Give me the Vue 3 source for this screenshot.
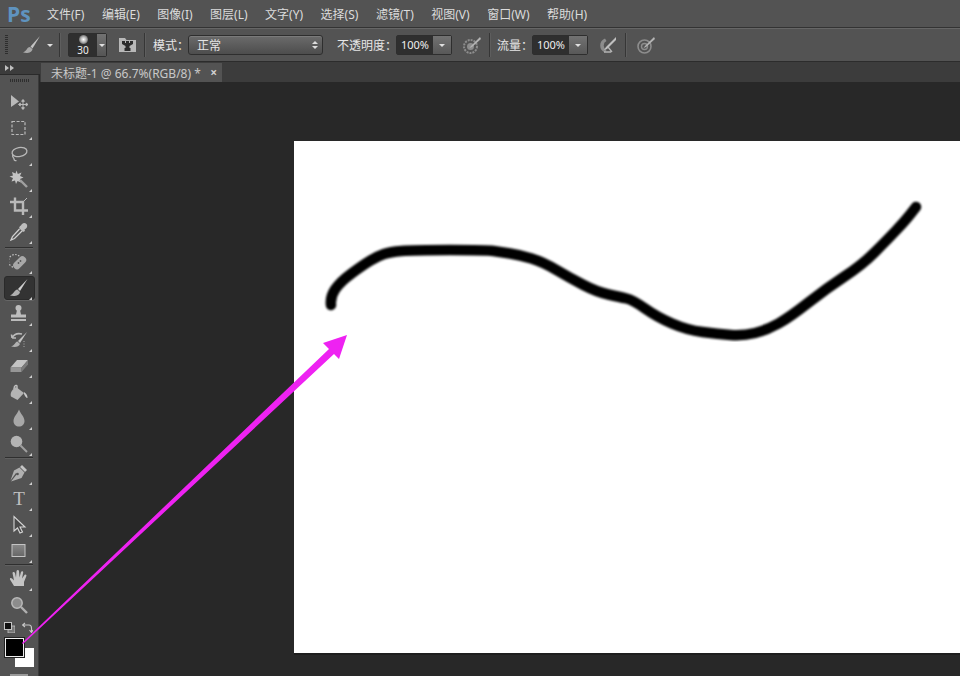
<template>
  <div class="ps">
    <header class="menubar">
      <span class="logo">Ps</span>
      <span v-for="m in menus" :key="m" class="menu-item">{{ m }}</span>
    </header>

    <section class="options">
      <span class="grip-v"></span>
      <svg class="opt-brush" width="20" height="20" viewBox="0 0 20 20">
        <path d="M18 1 L8.5 11.5 L10.5 13.5 Z" fill="#c4c4c4" />
        <path d="M8 12 C4.5 12.5 5 16 1 17.5 C5 18.5 10 18 10.5 14 Z" fill="#a8a8a8" />
      </svg>
      <span class="caret opt-caret"></span>
      <span class="sep"></span>
      <div class="preset">
        <div class="preset-view">
          <span class="dot"></span>
          <span class="size">30</span>
        </div>
        <div class="preset-arrow"><span class="caret"></span></div>
      </div>
      <svg class="opt-folder" width="17" height="16" viewBox="0 0 17 16">
        <path d="M0 1 H6 L7.5 3 H17 V15 H0 Z" fill="#b8b8b8" />
        <path d="M3 4 H6 V6 H7 V4 H10 V6 H11 V4 H14 V7 L10.500 9 V11 H11.500 V14 H5.500 V11 H6.500 V9 L3 7 Z" fill="#2e2e2e" />
      </svg>
      <span class="sep"></span>
      <span class="opt-label mode-label">模式：</span>
      <div class="select">
        <span>正常</span>
        <span class="updown"><i class="up"></i><i class="down"></i></span>
      </div>
      <span class="opt-label opacity-label">不透明度：</span>
      <div class="num">
        <span class="num-val">100%</span>
        <span class="num-arrow"><span class="caret"></span></span>
      </div>
      <svg class="opt-ico ico-opacity" width="18" height="18" viewBox="0 0 18 18">
        <circle cx="7.5" cy="10.5" r="6.5" fill="none" stroke="#8d8d8d" stroke-width="2" stroke-dasharray="2 1" />
        <circle cx="7.5" cy="10.5" r="3.5" fill="#8d8d8d" />
        <path d="M17 1 L8 10 L6.5 12 L9 11 L18 3 Z" fill="#b4b4b4" />
      </svg>
      <span class="sep"></span>
      <span class="opt-label flow-label">流量：</span>
      <div class="num">
        <span class="num-val">100%</span>
        <span class="num-arrow"><span class="caret"></span></span>
      </div>
      <svg class="opt-ico ico-flow" width="20" height="18" viewBox="0 0 20 18">
        <path d="M8 2.500 A7.500 7.500 0 0 0 8 16.500 L9.500 14 A5 5 0 0 1 9.500 5 Z" fill="#8d8d8d" />
        <path d="M19 1 L9 11 L7 14 L10 13 L19 4 Z" fill="#c0c0c0" />
        <path d="M11 11 L15 16 M7 16 L14 16" stroke="#b4b4b4" stroke-width="1.3" />
      </svg>
      <span class="sep"></span>
      <svg class="opt-ico ico-press" width="18" height="18" viewBox="0 0 18 18">
        <circle cx="7.5" cy="10.5" r="6.5" fill="none" stroke="#8d8d8d" stroke-width="1.6" />
        <circle cx="7.5" cy="10.5" r="3" fill="none" stroke="#8d8d8d" stroke-width="1.4" />
        <path d="M17 1 L8 10 L6.5 12 L9 11 L18 3 Z" fill="#b4b4b4" />
      </svg>
    </section>

    <div class="main">
      <aside class="toolbar">
        <div class="collapse">
          <i></i><i></i>
        </div>
        <div class="tool-panel">
          <div class="grip-h"></div>
          <div class="tools">
            <!-- move -->
            <div class="tool">
              <svg width="20" height="20" viewBox="0 0 20 20">
                <path d="M2 3 V15 L10 9.5 Z" fill="#b9b9b9" />
                <path d="M14 8 V17 M10 12.5 H18.5 M14 7.5 L12.6 9.3 H15.4 Z M14 17.5 L12.6 15.7 H15.4 Z M9.5 12.5 L11.3 11.1 V13.9 Z M19 12.5 L17.2 11.1 V13.9 Z" stroke="#b9b9b9" stroke-width="1" fill="#b9b9b9" />
              </svg>
            </div>
            <!-- marquee -->
            <div class="tool more">
              <svg width="20" height="20" viewBox="0 0 20 20">
                <rect x="3" y="3.5" width="13" height="13" fill="none" stroke="#b9b9b9" stroke-width="1.2" stroke-dasharray="3 1.6" />
              </svg>
            </div>
            <!-- lasso -->
            <div class="tool more">
              <svg width="20" height="20" viewBox="0 0 20 20">
                <ellipse cx="10.5" cy="8" rx="7.5" ry="4.5" transform="rotate(-10 10.5 8)" fill="none" stroke="#b9b9b9" stroke-width="1.3" />
                <path d="M4 10.5 C2.5 13 5 13.5 5 15 C5 16.5 6.5 17 7.5 16.5" fill="none" stroke="#b9b9b9" stroke-width="1.3" />
              </svg>
            </div>
            <!-- wand -->
            <div class="tool more">
              <svg width="20" height="20" viewBox="0 0 20 20">
                <path d="M7.5 0.5 L8.8 4 L12.5 2.5 L11 6 L14.5 7.5 L11 9 L12 12.5 L8.5 11 L7 14 L6 10.5 L2.5 11.5 L4 8 L0.5 6.5 L4 5.5 L3 2 L6.5 3.5 Z" fill="#c4c4c4" />
                <path d="M11 10 L18 17" stroke="#a0a0a0" stroke-width="2.4" />
              </svg>
            </div>
            <!-- crop -->
            <div class="tool more">
              <svg width="20" height="20" viewBox="0 0 20 20">
                <path d="M6 1.5 V14.5 H19 M1 6 H14 V19" fill="none" stroke="#b9b9b9" stroke-width="2.4" />
                <path d="M14 6 L18 2" stroke="#b9b9b9" stroke-width="1" />
              </svg>
            </div>
            <!-- eyedropper -->
            <div class="tool more">
              <svg width="20" height="20" viewBox="0 0 20 20">
                <path d="M12 3.5 C13 1 15.5 0 17.5 2 C19 4 18 6.500 15.5 7.500 L16 9 L14 10 L10 6 L11 4 Z" fill="#bdbdbd" />
                <path d="M10.500 7 L3.500 14.500 L2 18 L5.500 16.500 L13 9" fill="none" stroke="#d0d0d0" stroke-width="1.3" />
              </svg>
            </div>
            <div class="tool-sep first"></div>
            <!-- healing -->
            <div class="tool more">
              <svg width="20" height="20" viewBox="0 0 20 20">
                <circle cx="6" cy="9" r="6.500" fill="none" stroke="#c0c0c0" stroke-width="1.2" stroke-dasharray="1.500 1.500" />
                <rect x="3" y="7" width="15" height="7.500" rx="3.500" transform="rotate(-45 10.500 10.500)" fill="#a8a8a8" />
                <circle cx="9.500" cy="11" r="0.900" fill="#555" />
                <circle cx="11.500" cy="9" r="0.900" fill="#555" />
              </svg>
            </div>
            <!-- brush -->
            <div class="tool more active">
              <svg width="20" height="20" viewBox="0 0 20 20">
                <path d="M18.500 1 L9 11 L11 13 Z" fill="#d0d0d0" />
                <path d="M8.500 11.500 C5 12 5 16 1 17.500 C5 18.500 10.500 18 11 14 Z" fill="#b0b0b0" />
              </svg>
            </div>
            <!-- stamp -->
            <div class="tool more">
              <svg width="20" height="20" viewBox="0 0 20 20">
                <circle cx="9.500" cy="4" r="3" fill="#bdbdbd" />
                <path d="M8 6 H11 L12 10.500 H17 V13.500 H2 V10.500 H7 Z" fill="#bdbdbd" />
                <path d="M2 16 H17" stroke="#c8c8c8" stroke-width="1.800" />
              </svg>
            </div>
            <!-- history brush -->
            <div class="tool more">
              <svg width="20" height="20" viewBox="0 0 20 20">
                <path d="M18 2 L9 11 L11 13 Z" fill="#c4c4c4" />
                <path d="M8.500 11.500 C6 12 6 15 2 16.500 C6 17.500 10 17 11 14 Z" fill="#b0b0b0" />
                <path d="M3 8 C5 4 9 3 13 4 M3 8 L2.500 4.500 M3 8 L7 8" fill="none" stroke="#b9b9b9" stroke-width="1.600" />
                <path d="M15 11 V17" stroke="#999" stroke-width="1.200" stroke-dasharray="1 1.500" />
              </svg>
            </div>
            <!-- eraser -->
            <div class="tool more">
              <svg width="20" height="20" viewBox="0 0 20 20">
                <path d="M8 4 H19 L12.500 11.500 H1.500 Z" fill="#c4c4c4" />
                <path d="M1.500 11.500 H12.500 V16 H1.500 Z" fill="#969696" />
                <path d="M12.500 11.500 L19 4 V8.500 L12.500 16 Z" fill="#7a7a7a" />
              </svg>
            </div>
            <!-- bucket -->
            <div class="tool more">
              <svg width="20" height="20" viewBox="0 0 20 20">
                <path d="M5 7 C5 3 7.500 3 8 4 V8" fill="none" stroke="#c0c0c0" stroke-width="1.400" />
                <path d="M7 5 L15 11 L8.500 18 L2 14.500 C1 12 2 8 7 5 Z" fill="#b4b4b4" />
                <path d="M15 10 C18 12 18.500 14 18.500 16 C17 16 16 14 15 12 Z" fill="#c8c8c8" />
              </svg>
            </div>
            <!-- blur -->
            <div class="tool more">
              <svg width="20" height="20" viewBox="0 0 20 20">
                <path d="M10 1.500 C11.500 6 15.500 8.500 15.500 13 C15.500 16.500 13 18.500 10 18.500 C7 18.500 4.500 16.500 4.500 13 C4.500 8.500 8.500 6 10 1.500 Z" fill="#a8a8a8" />
              </svg>
            </div>
            <!-- dodge -->
            <div class="tool more">
              <svg width="20" height="20" viewBox="0 0 20 20">
                <circle cx="7.500" cy="7.500" r="5.800" fill="#b4b4b4" />
                <path d="M11.500 11.500 L18 18" stroke="#a0a0a0" stroke-width="2" />
              </svg>
            </div>
            <div class="tool-sep"></div>
            <!-- pen -->
            <div class="tool more tall">
              <svg width="20" height="20" viewBox="0 0 20 20">
                <path d="M13 2 L18 7 L16 9 L11 4 Z" fill="#c4c4c4" />
                <path d="M10.500 4.500 L15.500 9.500 L12.500 15 L2 18.500 L8 11 L7 10 L1.500 17.500 L5 7.500 Z" fill="#b0b0b0" />
                <circle cx="8.500" cy="11" r="1.300" fill="#555" />
              </svg>
            </div>
            <!-- type -->
            <div class="tool more">
              <span class="type-t">T</span>
            </div>
            <!-- path select -->
            <div class="tool more">
              <svg width="20" height="20" viewBox="0 0 20 20">
                <path d="M5 1.500 V16 L8.500 13 L11 18 L13.500 17 L11 12 H16 Z" fill="#4a4a4a" stroke="#d6d6d6" stroke-width="1.100" />
              </svg>
            </div>
            <!-- shape -->
            <div class="tool more">
              <svg width="20" height="20" viewBox="0 0 20 20">
                <defs>
                  <linearGradient id="shapeFill" x1="0" y1="0" x2="0" y2="1">
                    <stop offset="0" stop-color="#888" />
                    <stop offset="1" stop-color="#666" />
                  </linearGradient>
                </defs>
                <rect x="3" y="3.500" width="13" height="12" fill="url(#shapeFill)" stroke="#c4c4c4" stroke-width="1" />
              </svg>
            </div>
            <div class="tool-sep"></div>
            <!-- hand -->
            <div class="tool more">
              <svg width="20" height="20" viewBox="0 0 20 20">
                <path d="M5 17 L1 10.500 C0.500 9 2 8.500 3 9.500 L5 11.500 L3.500 4 C3.500 2.500 5.500 2.500 6 4 L7 8.500 L7.500 2 C8 0.800 9.800 0.800 10 2 L10.500 8.500 L12 3 C12.500 1.800 14.300 2 14.200 3.500 L13 9.500 L15.500 6 C16.500 5 18 6 17.300 7.300 L15 13 V17 Z" fill="#c4c4c4" />
              </svg>
            </div>
            <!-- zoom -->
            <div class="tool">
              <svg width="20" height="20" viewBox="0 0 20 20">
                <circle cx="8" cy="8" r="5.200" fill="#8c8c8c" stroke="#b9b9b9" stroke-width="1.500" />
                <path d="M12 12 L18 18" stroke="#b0b0b0" stroke-width="2.400" />
              </svg>
            </div>
          </div>
          <div class="colors-top">
            <svg width="11" height="11" viewBox="0 0 11 11">
              <rect x="4" y="4" width="7" height="7" fill="#777" stroke="#c4c4c4" stroke-width="0.800" />
              <rect x="0.500" y="0.500" width="7" height="7" fill="#111" stroke="#c4c4c4" stroke-width="1" />
            </svg>
            <svg width="11" height="11" viewBox="0 0 11 11">
              <path d="M1 3 H7 C9 3 9.500 4 9.500 6 V10 M3 1 L0.500 3 L3 5 M7.500 8 L9.500 10.500 L11 8" fill="none" stroke="#c8c8c8" stroke-width="1.100" />
            </svg>
          </div>
          <div class="swatches">
            <span class="swatch bg"></span>
            <span class="swatch fg"></span>
          </div>
          <div class="quickmask"></div>
        </div>
      </aside>

      <div class="doc-area">
        <div class="tabs">
          <div class="tab">
            <span>未标题-1 @ 66.7%(RGB/8) *</span>
            <span class="close">×</span>
          </div>
        </div>
        <div class="workspace">
          <div class="doc">
            <svg class="stroke-svg" width="666" height="512" viewBox="294 141 666 512">
              <defs>
                <filter id="soft" x="-5%" y="-5%" width="110%" height="110%">
                  <feGaussianBlur stdDeviation="1.300" />
                </filter>
              </defs>
              <path :d="strokePath" fill="none" stroke="#000" stroke-width="10.500" stroke-linecap="round" stroke-linejoin="round" filter="url(#soft)" />
            </svg>
          </div>
        </div>
      </div>
    </div>

    <svg class="arrow" width="960" height="676" viewBox="0 0 960 676">
      <polygon points="22,643 329,349 323,343 347,335 339,359 334,354 23,644" fill="#ee22f2" />
    </svg>
  </div>
</template>

<script setup>
const menus = [
  '文件(F)', '编辑(E)', '图像(I)', '图层(L)', '文字(Y)',
  '选择(S)', '滤镜(T)', '视图(V)', '窗口(W)', '帮助(H)',
]

// points read off the brush stroke in the picture
const pts = [
  [331, 305], [330, 297], [340, 282], [363, 265], [378, 256], [390, 252], [413, 250],
  [487, 250], [500, 252], [520, 255], [543, 262], [570, 278], [597, 292], [620, 297],
  [633, 300], [657, 317], [687, 330], [718, 334], [743, 336], [767, 330], [790, 317],
  [827, 288], [862, 265], [887, 240], [905, 221], [916, 207],
]

function smooth(list) {
  let d = `M${list[0][0]} ${list[0][1]}`
  for (let i = 1; i < list.length - 1; i++) {
    const mx = (list[i][0] + list[i + 1][0]) / 2
    const my = (list[i][1] + list[i + 1][1]) / 2
    d += ` Q${list[i][0]} ${list[i][1]} ${mx} ${my}`
  }
  const last = list[list.length - 1]
  return d + ` L${last[0]} ${last[1]}`
}

const strokePath = smooth(pts)
</script>

<style>
html, body {
  margin: 0;
  background: #282828;
  overflow: hidden;
}
</style>

<style scoped>
.ps {
  position: relative;
  width: 960px;
  height: 676px;
  overflow: hidden;
  display: flex;
  flex-direction: column;
  background: #282828;
  color: #e4e4e4;
  font: 12px "Noto Sans", "Noto Sans CJK SC", sans-serif;
}
.menubar {
  height: 28px;
  box-sizing: border-box;
  display: flex;
  align-items: center;
  background: #535353;
  border-bottom: 1px solid #333;
  padding-left: 7px;
}
.logo {
  width: 40px;
  font: bold 21px "Open Sans", sans-serif;
  color: #5f93bf;
}
.menu-item {
  margin-right: 17.5px;
  font-size: 12px;
  color: #dcdcdc;
  white-space: nowrap;
}
.options {
  height: 34px;
  box-sizing: border-box;
  display: flex;
  align-items: center;
  background: #535353;
  border-top: 1px solid #666;
  border-bottom: 1px solid #2c2c2c;
  padding-left: 5px;
}
.grip-v {
  width: 3px;
  height: 20px;
  background: repeating-linear-gradient(to bottom, #2e2e2e 0 1px, transparent 1px 2px);
  margin-right: 14px;
}
.opt-brush { margin-right: 5px; }
.caret {
  display: inline-block;
  width: 0;
  height: 0;
  border-left: 3px solid transparent;
  border-right: 3px solid transparent;
  border-top: 3px solid #e0e0e0;
}
.opt-caret { margin-right: 6px; }
.sep {
  width: 1px;
  height: 24px;
  background: #363636;
  border-right: 1px solid #5e5e5e;
}
.preset {
  margin-left: 7px;
  width: 39px;
  height: 24px;
  display: flex;
  border: 1px solid #2e2e2e;
  border-radius: 2px;
  box-sizing: border-box;
}
.preset-view {
  width: 28px;
  background: #2f2f2f;
  display: flex;
  flex-direction: column;
  align-items: center;
}
.dot {
  width: 9px;
  height: 9px;
  margin-top: 1px;
  border-radius: 50%;
  background: radial-gradient(circle, #fff 0, #bbb 40%, #2f2f2f 100%);
}
.size {
  font-size: 10px;
  line-height: 12px;
  color: #eee;
}
.preset-arrow {
  flex: 1;
  display: flex;
  align-items: center;
  justify-content: center;
  background: linear-gradient(#727272, #555);
}
.opt-folder { margin: 0 8px 0 12px; }
.opt-label {
  font-size: 12px;
  color: #e6e6e6;
  white-space: nowrap;
}
.mode-label { margin-left: 7px; width: 35px; }
.select {
  width: 135px;
  height: 20px;
  box-sizing: border-box;
  display: flex;
  align-items: center;
  justify-content: space-between;
  padding: 0 4px 0 8px;
  background: linear-gradient(#6b6b6b, #4d4d4d);
  border: 1px solid #2e2e2e;
  border-radius: 3px;
  box-shadow: inset 0 1px 0 #7a7a7a;
}
.updown {
  display: flex;
  flex-direction: column;
  gap: 2px;
}
.updown i {
  width: 0;
  height: 0;
  border-left: 3px solid transparent;
  border-right: 3px solid transparent;
}
.updown .up { border-bottom: 3px solid #ddd; }
.updown .down { border-top: 3px solid #ddd; }
.opacity-label { margin-left: 14px; width: 59px; }
.flow-label { margin-left: 6px; width: 35px; }
.num {
  width: 56px;
  height: 20px;
  box-sizing: border-box;
  display: flex;
  border: 1px solid #2e2e2e;
  border-radius: 2px;
}
.num-val {
  width: 36px;
  background: #2f2f2f;
  font-size: 11px;
  line-height: 18px;
  text-align: center;
  color: #eee;
}
.num-arrow {
  flex: 1;
  display: flex;
  align-items: center;
  justify-content: center;
  background: linear-gradient(#727272, #585858);
}
.opt-ico { flex: none; }
.ico-opacity { margin: 0 8px 0 11px; }
.ico-flow { margin: 0 8px 0 9px; }
.ico-press { margin-left: 10px; }

.main {
  flex: 1;
  display: flex;
  min-height: 0;
}
.toolbar {
  width: 40px;
  flex: none;
  display: flex;
  flex-direction: column;
  background: #282828;
}
.collapse {
  flex: none;
  height: 12px;
  background: #3c3c3c;
  border-bottom: 1px solid #2a2a2a;
  display: flex;
  align-items: center;
  padding-left: 5px;
  gap: 1px;
}
.collapse i {
  width: 0;
  height: 0;
  border-top: 3px solid transparent;
  border-bottom: 3px solid transparent;
  border-left: 4px solid #c0c0c0;
}
.tool-panel {
  flex: 1;
  min-height: 0;
  overflow: hidden;
  background: #535353;
  margin-right: 1px;
  border-right: 1px solid #3a3a3a;
  display: flex;
  flex-direction: column;
}
.tool-panel > * { flex: none; }
.grip-h {
  width: 20px;
  height: 3px;
  margin: 4px 0 7px 10px;
  background: repeating-linear-gradient(to right, #2e2e2e 0 1px, transparent 1px 2px);
}
.tools {
  display: flex;
  flex-direction: column;
}
.tool {
  position: relative;
  height: 26px;
  display: flex;
  align-items: center;
  justify-content: center;
}
.tool.tall { height: 27px; }
.tool.more::after {
  content: "";
  position: absolute;
  right: 6px;
  bottom: 1px;
  border-left: 3px solid transparent;
  border-bottom: 3px solid #d0d0d0;
}
.tool.active::before {
  content: "";
  position: absolute;
  left: 4px;
  right: 3px;
  top: 1px;
  bottom: 1px;
  background: #333;
  border: 1px solid #2a2a2a;
  border-radius: 3px;
  box-shadow: 0 1px 0 #666;
}
.tool svg { position: relative; }
.tool-sep {
  height: 0;
  margin: 0 5px;
  border-top: 1px solid #2f2f2f;
  border-bottom: 1px solid #606060;
}
.tool-sep.first { margin: 2px 5px 0; }
.type-t {
  font: 19px "Liberation Serif", serif;
  color: #c0c0c0;
  line-height: 20px;
}
.colors-top {
  display: flex;
  justify-content: space-between;
  padding: 4px 5px 0 4px;
  height: 16px;
  box-sizing: border-box;
}
.swatches {
  position: relative;
  height: 36px;
  margin-top: 4px;
}
.swatch {
  position: absolute;
  box-sizing: border-box;
  width: 19px;
  height: 19px;
  border: 1px solid #eee;
}
.swatch.fg {
  left: 5px;
  top: 0;
  background: #000;
  outline: 1px solid #222;
}
.swatch.bg {
  left: 15px;
  top: 10px;
  background: #fff;
  border-color: #fff;
}
.quickmask {
  width: 18px;
  height: 6px;
  margin: 0 0 0 10px;
  background: #9a9a9a;
}

.doc-area {
  flex: 1;
  min-width: 0;
  display: flex;
  flex-direction: column;
}
.tabs {
  height: 20px;
  background: #3c3c3c;
  padding: 1px 0 0 1px;
  box-sizing: border-box;
  display: flex;
}
.tab {
  width: 181px;
  box-sizing: border-box;
  background: #535353;
  display: flex;
  align-items: center;
  justify-content: space-between;
  padding: 0 5px 0 10px;
  font-size: 12px;
  color: #c8c8c8;
  white-space: nowrap;
}
.close {
  font-size: 12px;
  font-weight: bold;
  color: #d0d0d0;
}
.workspace {
  flex: 1;
  padding: 59px 0 0 254px;
  background: #282828;
}
.doc {
  width: 666px;
  height: 512px;
  background: #fff;
  box-shadow: 0 2px 0 #1e1e1e;
}
.stroke-svg { display: block; }
.arrow {
  position: absolute;
  left: 0;
  top: 0;
  pointer-events: none;
}
</style>
